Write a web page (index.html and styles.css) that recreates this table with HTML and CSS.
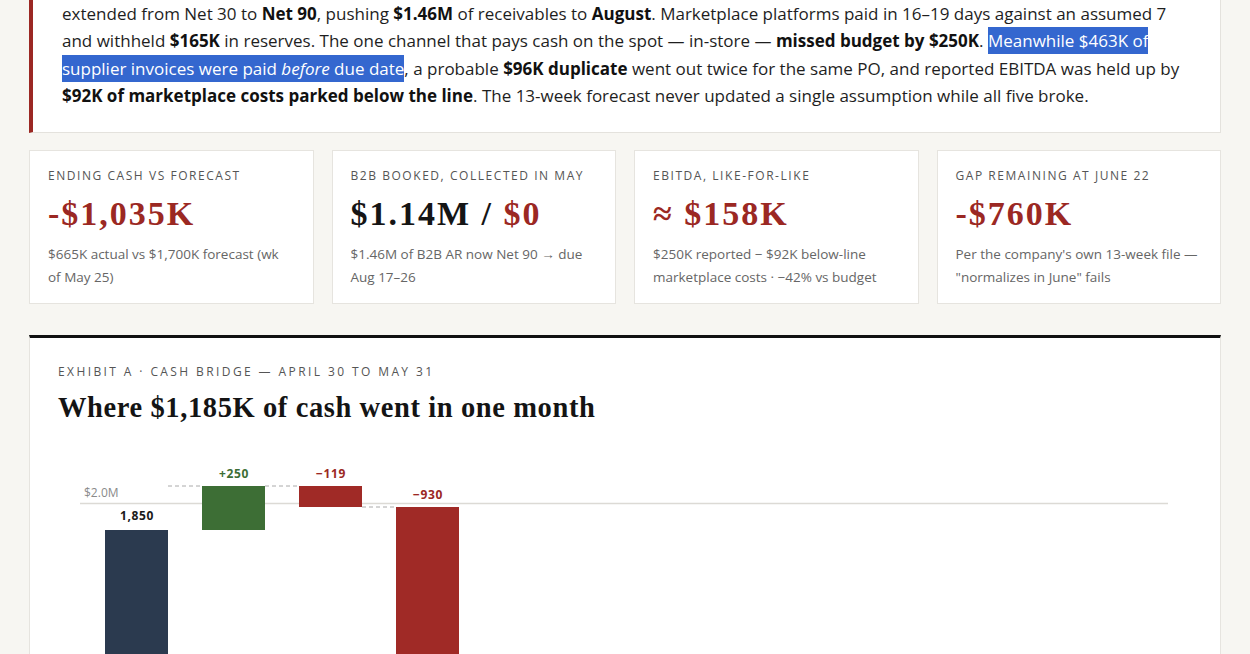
FILE: index.html
```html
<!DOCTYPE html>
<html lang="en">
<head>
<meta charset="utf-8">
<title>Cash bridge memo</title>
<link rel="stylesheet" href="styles.css">
</head>
<body>
<main class="page">
  <section class="callout">
    <p class="lede">
      <span class="ln">extended from Net 30 to <b>Net 90</b>, pushing <b>$1.46M</b> of receivables to <b>August</b>. Marketplace platforms paid in 16–19 days against an assumed 7</span>
      <span class="ln">and withheld <b>$165K</b> in reserves. The one channel that pays cash on the spot — in-store — <b>missed budget by $250K</b>. <span class="sel">Meanwhile $463K of</span></span>
      <span class="ln"><span class="sel">supplier invoices were paid <i>before</i> due date</span>, a probable <b>$96K duplicate</b> went out twice for the same PO, and reported EBITDA was held up by</span>
      <span class="ln"><b>$92K of marketplace costs parked below the line</b>. The 13-week forecast never updated a single assumption while all five broke.</span>
    </p>
  </section>

  <section class="cards">
    <article class="card">
      <div class="card-label">Ending cash vs forecast</div>
      <div class="card-value red">-$1,035K</div>
      <div class="card-sub">$665K actual vs $1,700K forecast (wk<br>of May 25)</div>
    </article>
    <article class="card">
      <div class="card-label">B2B booked, collected in May</div>
      <div class="card-value">$1.14M / <span class="red">$0</span></div>
      <div class="card-sub">$1.46M of B2B AR now Net 90 → due<br>Aug 17–26</div>
    </article>
    <article class="card">
      <div class="card-label">EBITDA, like-for-like</div>
      <div class="card-value red">≈ $158K</div>
      <div class="card-sub">$250K reported − $92K below-line<br>marketplace costs · −42% vs budget</div>
    </article>
    <article class="card">
      <div class="card-label">Gap remaining at June 22</div>
      <div class="card-value red">-$760K</div>
      <div class="card-sub">Per the company's own 13-week file —<br>"normalizes in June" fails</div>
    </article>
  </section>

  <section class="exhibit">
    <div class="ex-label">Exhibit A · Cash bridge — April 30 to May 31</div>
    <h2 class="ex-title">Where $1,185K of cash went in one month</h2>
    <svg class="chart" width="1134" height="230" viewBox="0 0 1134 230">
      <line x1="22" y1="53.5" x2="1110" y2="53.5" stroke="#dcdad5" stroke-width="1.5"/>
      <text x="26" y="47" class="axis">$2.0M</text>

      <rect x="47" y="80" width="63" height="160" fill="#2b3a4f"/>
      <text x="79" y="70" class="val dark" text-anchor="middle">1,850</text>

      <line x1="110" y1="36" x2="144" y2="36" class="dash"/>
      <rect x="144" y="36" width="63" height="44" fill="#3d6e35"/>
      <text x="176" y="28" class="val green" text-anchor="middle">+250</text>

      <line x1="207" y1="36" x2="241" y2="36" class="dash"/>
      <rect x="241" y="36" width="63" height="21" fill="#a02a26"/>
      <text x="273" y="28" class="val redt" text-anchor="middle">−119</text>

      <line x1="304" y1="57" x2="338" y2="57" class="dash"/>
      <rect x="338" y="57" width="63" height="183" fill="#a02a26"/>
      <text x="370" y="49" class="val redt" text-anchor="middle">−930</text>
    </svg>
  </section>
</main>
</body>
</html>
```

FILE: styles.css
```css
html, body {
  margin: 0;
  padding: 0;
}
body {
  background: #f7f6f2;
  font-family: "Open Sans", "Noto Sans", sans-serif;
  color: #222;
}
.page {
  width: 1192px;
  margin-left: 29px;
  display: flex;
  flex-direction: column;
}
.callout {
  background: #fff;
  border-left: 4px solid #9b2823;
  border-right: 1px solid #e4e2dd;
  border-bottom: 1px solid #e4e2dd;
  padding: 0 20px 22px 29px;
}
.lede {
  margin: 0;
  font-size: 17px;
  line-height: 27.4px;
  color: #1e1e1e;
}
.lede .ln {
  display: block;
  white-space: nowrap;
}
.lede b {
  font-weight: 700;
  color: #111;
}
.sel {
  background: #3467cf;
  color: #fff;
  padding: 2px 0;
}
.cards {
  display: grid;
  grid-template-columns: repeat(4, 1fr);
  gap: 18px;
  margin-top: 17px;
}
.card {
  background: #fff;
  border: 1px solid #e6e4df;
  padding: 17px 18px 14px 18px;
  display: flex;
  flex-direction: column;
}
.card-label {
  font-size: 12px;
  line-height: 16px;
  letter-spacing: 1.55px;
  text-transform: uppercase;
  color: #555;
}
.card-value {
  margin-top: 12px;
  font-family: "Liberation Serif", "DejaVu Serif", serif;
  font-weight: 700;
  font-size: 34px;
  line-height: 36px;
  letter-spacing: 2px;
  color: #151515;
}
.red {
  color: #9b2823;
}
.card-sub {
  margin-top: 11px;
  font-size: 13.5px;
  line-height: 23px;
  color: #666;
}
.exhibit {
  margin-top: 31px;
  background: #fff;
  border-top: 3px solid #111;
  border-left: 1px solid #e6e4df;
  border-right: 1px solid #e6e4df;
  padding: 26px 28px 0 28px;
  display: flex;
  flex-direction: column;
}
.ex-label {
  font-size: 12px;
  line-height: 16px;
  letter-spacing: 2.4px;
  text-transform: uppercase;
  color: #555;
}
.ex-title {
  margin: 11px 0 0 0;
  font-family: "Liberation Serif", "DejaVu Serif", serif;
  font-weight: 700;
  font-size: 28.5px;
  line-height: 34px;
  letter-spacing: 0.6px;
  color: #141414;
}
.chart {
  display: block;
  margin-top: 25px;
}
.chart .axis {
  font-family: "Open Sans", sans-serif;
  font-size: 12px;
  fill: #8a8a8a;
}
.chart .val {
  font-family: "Open Sans", sans-serif;
  font-size: 12px;
  font-weight: 700;
  letter-spacing: 0.6px;
}
.chart .dark { fill: #1a1a1a; }
.chart .green { fill: #3d6e35; }
.chart .redt { fill: #9b2823; }
.chart .dash {
  stroke: #aaa;
  stroke-width: 1;
  stroke-dasharray: 4 3;
}
```
